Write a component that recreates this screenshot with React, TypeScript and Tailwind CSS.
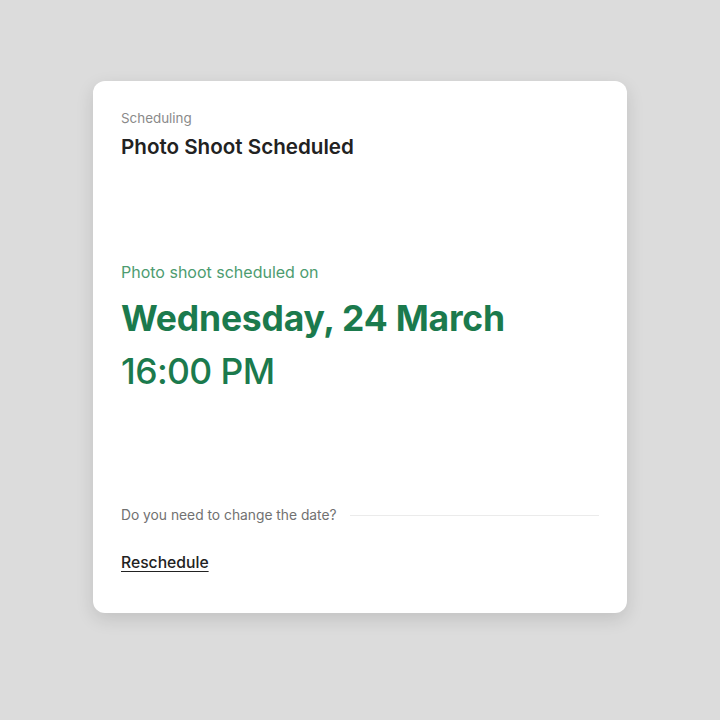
export default function App() {
  return (
    <div
      className="min-h-screen w-full bg-[#dcdcdc] flex items-start justify-center pt-[81px]"
      style={{ fontFamily: "Inter, 'Noto Sans', sans-serif" }}
    >
      <div className="w-[534px] h-[532px] bg-white rounded-[12px] shadow-[0_6px_18px_rgba(0,0,0,0.12)] px-[28px] pt-[28px] flex flex-col">
        <div className="text-[13.4px] leading-[18px] text-[#8a8a8a]">Scheduling</div>
        <div className="mt-[6px] text-[20.6px] leading-[28px] font-semibold text-[#222222]">
          Photo Shoot Scheduled
        </div>

        <div className="mt-[101px] text-[16px] leading-[20px] text-[#4d9c70]">
          Photo shoot scheduled on
        </div>
        <div className="mt-[10px] text-[35.5px] leading-[53px] font-bold text-[#1b7a4d] tracking-[-0.2px]">
          Wednesday, 24 March
        </div>
        <div className="text-[35.5px] leading-[53px] font-medium text-[#1b7a4d] tracking-[-0.6px]">
          16:00 PM
        </div>

        <div className="mt-[108px] flex items-center gap-[13px]">
          <span className="text-[13.8px] leading-[18px] text-[#717171] whitespace-nowrap">
            Do you need to change the date?
          </span>
          <div className="flex-1 h-px bg-[#ebebeb]" />
        </div>

        <div className="mt-[26px]">
          <button className="text-[15.7px] leading-[20px] font-medium text-[#222222] underline underline-offset-[3px]">
            Reschedule
          </button>
        </div>
      </div>
    </div>
  );
}
